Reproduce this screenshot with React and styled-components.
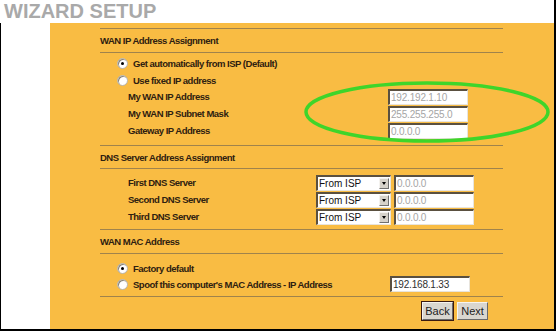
import styled, { createGlobalStyle } from "styled-components";

const GlobalStyle = createGlobalStyle`
  html, body {
    margin: 0;
    padding: 0;
    background: #ffffff;
  }
  body {
    font-family: "Liberation Sans", Arial, sans-serif;
  }
`;

const Frame = styled.div`
  width: 556px;
  height: 331px;
  box-sizing: border-box;
  border-right: 2px solid #000;
  border-bottom: 2px solid #000;
  display: flex;
  flex-direction: column;
  overflow: hidden;
`;

const TitleBar = styled.div`
  height: 23px;
  flex: none;
  padding-left: 4px;
  font-size: 20px;
  font-weight: bold;
  line-height: 22px;
  color: #a9a9a9;
`;

const Main = styled.div`
  flex: 1;
  display: flex;
  border-left: 1px solid #000;
`;

const Gutter = styled.div`
  width: 49px;
  flex: none;
  background: #fff;
`;

const Panel = styled.div`
  position: relative;
  flex: 1;
  background: #f9bc43;
  padding: 5px 0 0 50px;
`;

const Content = styled.div`
  width: 403px;
  display: flex;
  flex-direction: column;
`;

const Rule = styled.div`
  height: 1px;
  background: #a0834c;
  margin-top: ${(p) => p.$gap || 0}px;
`;

const Heading = styled.div`
  height: ${(p) => p.$h || 23}px;
  display: flex;
  align-items: center;
  font-size: 9.5px;
  font-weight: bold;
  letter-spacing: -0.5px;
  color: #2e2010;
`;

const Rows = styled.div`
  display: flex;
  flex-direction: column;
  padding-top: ${(p) => p.$top || 0}px;
`;

const Row = styled.div`
  height: ${(p) => p.$h || 17}px;
  display: flex;
  align-items: center;
  padding-left: ${(p) => p.$indent || 0}px;
  font-size: 9.5px;
  font-weight: bold;
  letter-spacing: -0.5px;
  color: #2e2010;
`;

const Label = styled.span`
  width: ${(p) => p.$w}px;
  flex: none;
  white-space: nowrap;
`;

const Radio = styled.span`
  width: 9px;
  height: 9px;
  flex: none;
  margin-right: 5px;
  border-radius: 50%;
  background: #fff;
  border: 1px solid #b9b4a8;
  box-shadow: inset 1px 1px 0 #8a8578;
  display: flex;
  align-items: center;
  justify-content: center;
  &::after {
    content: "";
    width: 3px;
    height: 3px;
    border-radius: 50%;
    background: ${(p) => (p.$on ? "#000" : "transparent")};
  }
`;

const TextBox = styled.div`
  width: 80px;
  height: 16px;
  box-sizing: border-box;
  flex: none;
  background: #fff;
  border-top: 2px solid #5a5040;
  border-left: 2px solid #5a5040;
  border-right: 1px solid #e8e4dc;
  border-bottom: 1px solid #e8e4dc;
  padding-left: 1px;
  font-size: 10px;
  font-weight: normal;
  letter-spacing: -0.2px;
  line-height: 13px;
  color: ${(p) => (p.$dim ? "#a5a5a5" : "#303030")};
`;

const Select = styled.div`
  width: 75px;
  height: 16px;
  box-sizing: border-box;
  flex: none;
  margin-right: 3px;
  background: #fff;
  border-top: 2px solid #5a5040;
  border-left: 2px solid #5a5040;
  border-right: 1px solid #e8e4dc;
  border-bottom: 1px solid #e8e4dc;
  display: flex;
  align-items: center;
  justify-content: space-between;
  font-size: 10px;
  font-weight: normal;
  letter-spacing: 0;
  color: #111;
  padding-left: 1px;
`;

const DropButton = styled.span`
  width: 10px;
  height: 11px;
  box-sizing: border-box;
  background: #d6d2ca;
  border: 1px solid;
  border-color: #f4f2ee #707070 #707070 #f4f2ee;
  margin-right: 1px;
  display: flex;
  align-items: center;
  justify-content: center;
  &::after {
    content: "";
    border-left: 2.5px solid transparent;
    border-right: 2.5px solid transparent;
    border-top: 3px solid #000;
  }
`;

const ButtonBar = styled.div`
  display: flex;
  justify-content: flex-end;
  gap: 4px;
  padding: 5px 15px 0 0;
`;

const Button = styled.div`
  height: 18px;
  width: ${(p) => p.$w}px;
  box-sizing: border-box;
  background: #d9d6d0;
  border: 1px solid;
  border-color: #f6f4f0 #6a6a6a #6a6a6a #f6f4f0;
  outline: ${(p) => (p.$focus ? "1px solid #3a1a10" : "none")};
  display: flex;
  align-items: center;
  justify-content: center;
  font-size: 11px;
  color: #222;
`;

const Highlight = styled.svg`
  position: absolute;
  left: 252px;
  top: 57px;
  pointer-events: none;
`;

const dnsRows = ["First DNS Server", "Second DNS Server", "Third DNS Server"];

const wanRows = [
  ["My WAN IP Address", "192.192.1.10"],
  ["My WAN IP Subnet Mask", "255.255.255.0"],
  ["Gateway IP Address", "0.0.0.0"],
];

const App = () => (
  <>
    <GlobalStyle />
    <Frame>
      <TitleBar>WIZARD SETUP</TitleBar>
      <Main>
        <Gutter />
        <Panel>
          <Content>
            <Rule />
            <Heading>WAN IP Address Assignment</Heading>
            <Rule />
            <Rows $top={2}>
              <Row $indent={17}>
                <Radio $on />
                Get automatically from ISP (Default)
              </Row>
              <Row $indent={17} $h={16}>
                <Radio />
                Use fixed IP address
              </Row>
              {wanRows.map(([label, value]) => (
                <Row key={label} $indent={28}>
                  <Label $w={260}>{label}</Label>
                  <TextBox $dim>{value}</TextBox>
                </Row>
              ))}
            </Rows>
            <Rule $gap={6} />
            <Heading $h={22}>DNS Server Address Assignment</Heading>
            <Rule />
            <Rows $top={5}>
              {dnsRows.map((label) => (
                <Row key={label} $indent={28}>
                  <Label $w={188}>{label}</Label>
                  <Select>
                    From ISP
                    <DropButton />
                  </Select>
                  <TextBox $dim>0.0.0.0</TextBox>
                </Row>
              ))}
            </Rows>
            <Rule $gap={4} />
            <Heading $h={23}>WAN MAC Address</Heading>
            <Rule />
            <Rows $top={6}>
              <Row $indent={17} $h={16}>
                <Radio $on />
                Factory default
              </Row>
              <Row $indent={17} $h={16}>
                <Radio />
                <Label $w={257}>Spoof this computer's MAC Address - IP Address</Label>
                <TextBox>192.168.1.33</TextBox>
              </Row>
            </Rows>
            <Rule $gap={4} />
            <ButtonBar>
              <Button $w={31} $focus>Back</Button>
              <Button $w={31}>Next</Button>
            </ButtonBar>
          </Content>
          <Highlight width="250" height="64" viewBox="0 0 250 64">
            <ellipse cx="125" cy="32" rx="121" ry="29" fill="none" stroke="#3fd52a" strokeWidth="3.5" />
          </Highlight>
        </Panel>
      </Main>
    </Frame>
  </>
);

export default App;
